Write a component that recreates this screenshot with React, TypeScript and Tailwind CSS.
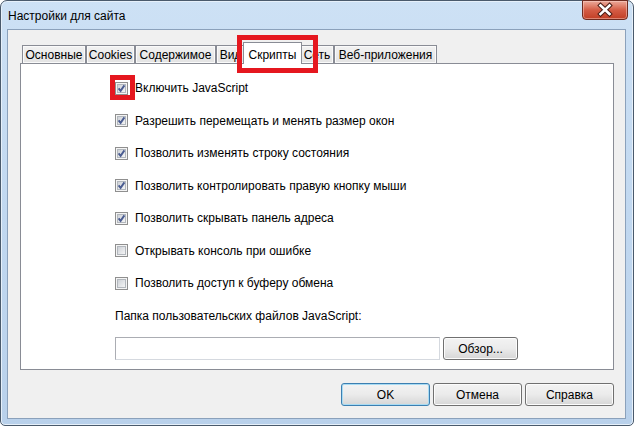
import React from "react";

const options = [
  { label: "Включить JavaScript", checked: true },
  { label: "Разрешить перемещать и менять размер окон", checked: true },
  { label: "Позволить изменять строку состояния", checked: true },
  { label: "Позволить контролировать правую кнопку мыши", checked: true },
  { label: "Позволить скрывать панель адреса", checked: true },
  { label: "Открывать консоль при ошибке", checked: false },
  { label: "Позволить доступ к буферу обмена", checked: false },
];

const tabs = [
  { label: "Основные", w: "w-[64px]" },
  { label: "Cookies", w: "w-[49px]" },
  { label: "Содержимое", w: "w-[81px]" },
  { label: "Вид", w: "w-[29px]" },
  { label: "Скрипты", w: "w-[59px]", active: true },
  { label: "Сеть", w: "w-[34px]" },
  { label: "Веб-приложения", w: "w-[103px]" },
];

function Checkbox({ checked }: { checked: boolean }) {
  return (
    <svg width="13" height="13" viewBox="0 0 13 13" className="shrink-0">
      <defs>
        <linearGradient id="cbInner" x1="0" y1="0" x2="1" y2="1">
          <stop offset="0" stopColor="#cbcfd5" />
          <stop offset="1" stopColor="#f7f7f7" />
        </linearGradient>
      </defs>
      <rect x="0.5" y="0.5" width="12" height="12" fill="#f4f4f4" stroke="#8f8f8f" />
      <rect x="2.5" y="2.5" width="8" height="8" fill="url(#cbInner)" stroke="#b2b7bd" />
      {checked && (
        <path d="M3.6 6.4 L5.6 8.9 L9.4 3.4" fill="none" stroke="#4a5c91" strokeWidth="1.9" />
      )}
    </svg>
  );
}

function WinButton({ children, def, className }: { children: React.ReactNode; def?: boolean; className?: string }) {
  return (
    <div
      className={
        "h-[23px] flex items-center justify-center rounded-[3px] border text-[12px] text-black bg-gradient-to-b from-[#f3f3f3] via-[#ebebeb] to-[#d6d6d6] " +
        (def ? "border-[#3c7fb1] shadow-[inset_0_0_0_1px_#a8dbf3] " : "border-[#707070] shadow-[inset_0_0_0_1px_#fcfcfc] ") +
        (className ?? "")
      }
    >
      {children}
    </div>
  );
}

export default function App() {
  return (
    <div className="relative w-[634px] h-[426px] overflow-hidden bg-white font-['Liberation_Sans',sans-serif]">
      <div className="w-full h-full flex flex-col border border-[#4a5a6c] rounded-t-[7px] rounded-b-[5px] bg-gradient-to-b from-[#cde1f5] via-[#c1d8f0] to-[#b9d1eb] shadow-[inset_0_0_0_1px_#e6f0fa]">
        {/* title bar */}
        <div className="h-[28px] flex items-start justify-between pl-[7px] pr-[5px]">
          <span className="mt-[6px] text-[12px] text-black">Настройки для сайта</span>
          <div className="-mt-[1px] w-[46px] h-[20px] rounded-b-[4px] border border-[#6e2b20] bg-gradient-to-b from-[#eba99a] via-[#d45c45] to-[#c13e24] shadow-[inset_0_0_0_1px_rgba(255,220,210,0.45)]">
            <svg width="44" height="18" viewBox="0 0 44 18">
              <path d="M17.5 4.5 L26.5 13 M26.5 4.5 L17.5 13" stroke="#4a1d16" strokeWidth="4.6" strokeLinecap="square" />
              <path d="M17.5 4.5 L26.5 13 M26.5 4.5 L17.5 13" stroke="#ffffff" strokeWidth="2.6" strokeLinecap="square" />
            </svg>
          </div>
        </div>

        {/* client area */}
        <div className="ml-[6px] mr-[7px] mb-[6px] flex-1 flex flex-col border border-[#8ba1bb] bg-[#f0f0f0] pl-[12px] pr-[11px]">
          {/* tabs */}
          <div className="mt-[12px] h-[21px] flex items-end pl-[2px]">
            {tabs.map((t) =>
              t.active ? (
                <div
                  key={t.label}
                  className={`${t.w} -mx-[2px] -mb-[1px] relative z-10 h-[22px] bg-white border border-b-0 border-[#898c95] flex items-start justify-center pt-[3px] text-[12px] text-black`}
                >
                  {t.label}
                </div>
              ) : (
                <div
                  key={t.label}
                  className={`${t.w} h-[18px] border border-b-0 border-[#898c95] bg-gradient-to-b from-[#f2f2f2] to-[#e3e3e3] shadow-[inset_0_0_0_1px_#fafafa] flex items-center justify-center text-[12px] text-black whitespace-nowrap overflow-hidden`}
                >
                  {t.label}
                </div>
              )
            )}
          </div>

          {/* panel */}
          <div className="h-[307px] bg-white border border-[#898c95] pl-[94px] pt-[8px] flex flex-col">
            {options.map((o) => (
              <div key={o.label} className="h-[32.5px] flex items-center gap-[7px] text-[12px] text-black">
                <Checkbox checked={o.checked} />
                <span>{o.label}</span>
              </div>
            ))}
            <div className="h-[32.5px] flex items-center text-[12px] text-black">
              Папка пользовательских файлов JavaScript:
            </div>
            <div className="mt-[5px] flex items-center gap-[3px]">
              <div className="w-[325px] h-[23px] bg-white border border-[#abadb3] border-r-[#d5d9df] border-b-[#d5d9df]" />
              <WinButton className="w-[75px]">Обзор...</WinButton>
            </div>
          </div>

          {/* bottom buttons */}
          <div className="mt-[13px] flex justify-end gap-[3px]">
            <WinButton def className="w-[89px]">OK</WinButton>
            <WinButton className="w-[89px]">Отмена</WinButton>
            <WinButton className="w-[89px]">Справка</WinButton>
          </div>
        </div>
      </div>

      {/* red highlight marks */}
      <div className="absolute left-[237px] top-[35px] w-[81px] h-[38px] border-[5px] border-[#e5171f] z-20" />
      <div className="absolute left-[110px] top-[75px] w-[25px] h-[25px] border-[5px] border-[#e5171f] z-20" />
    </div>
  );
}
